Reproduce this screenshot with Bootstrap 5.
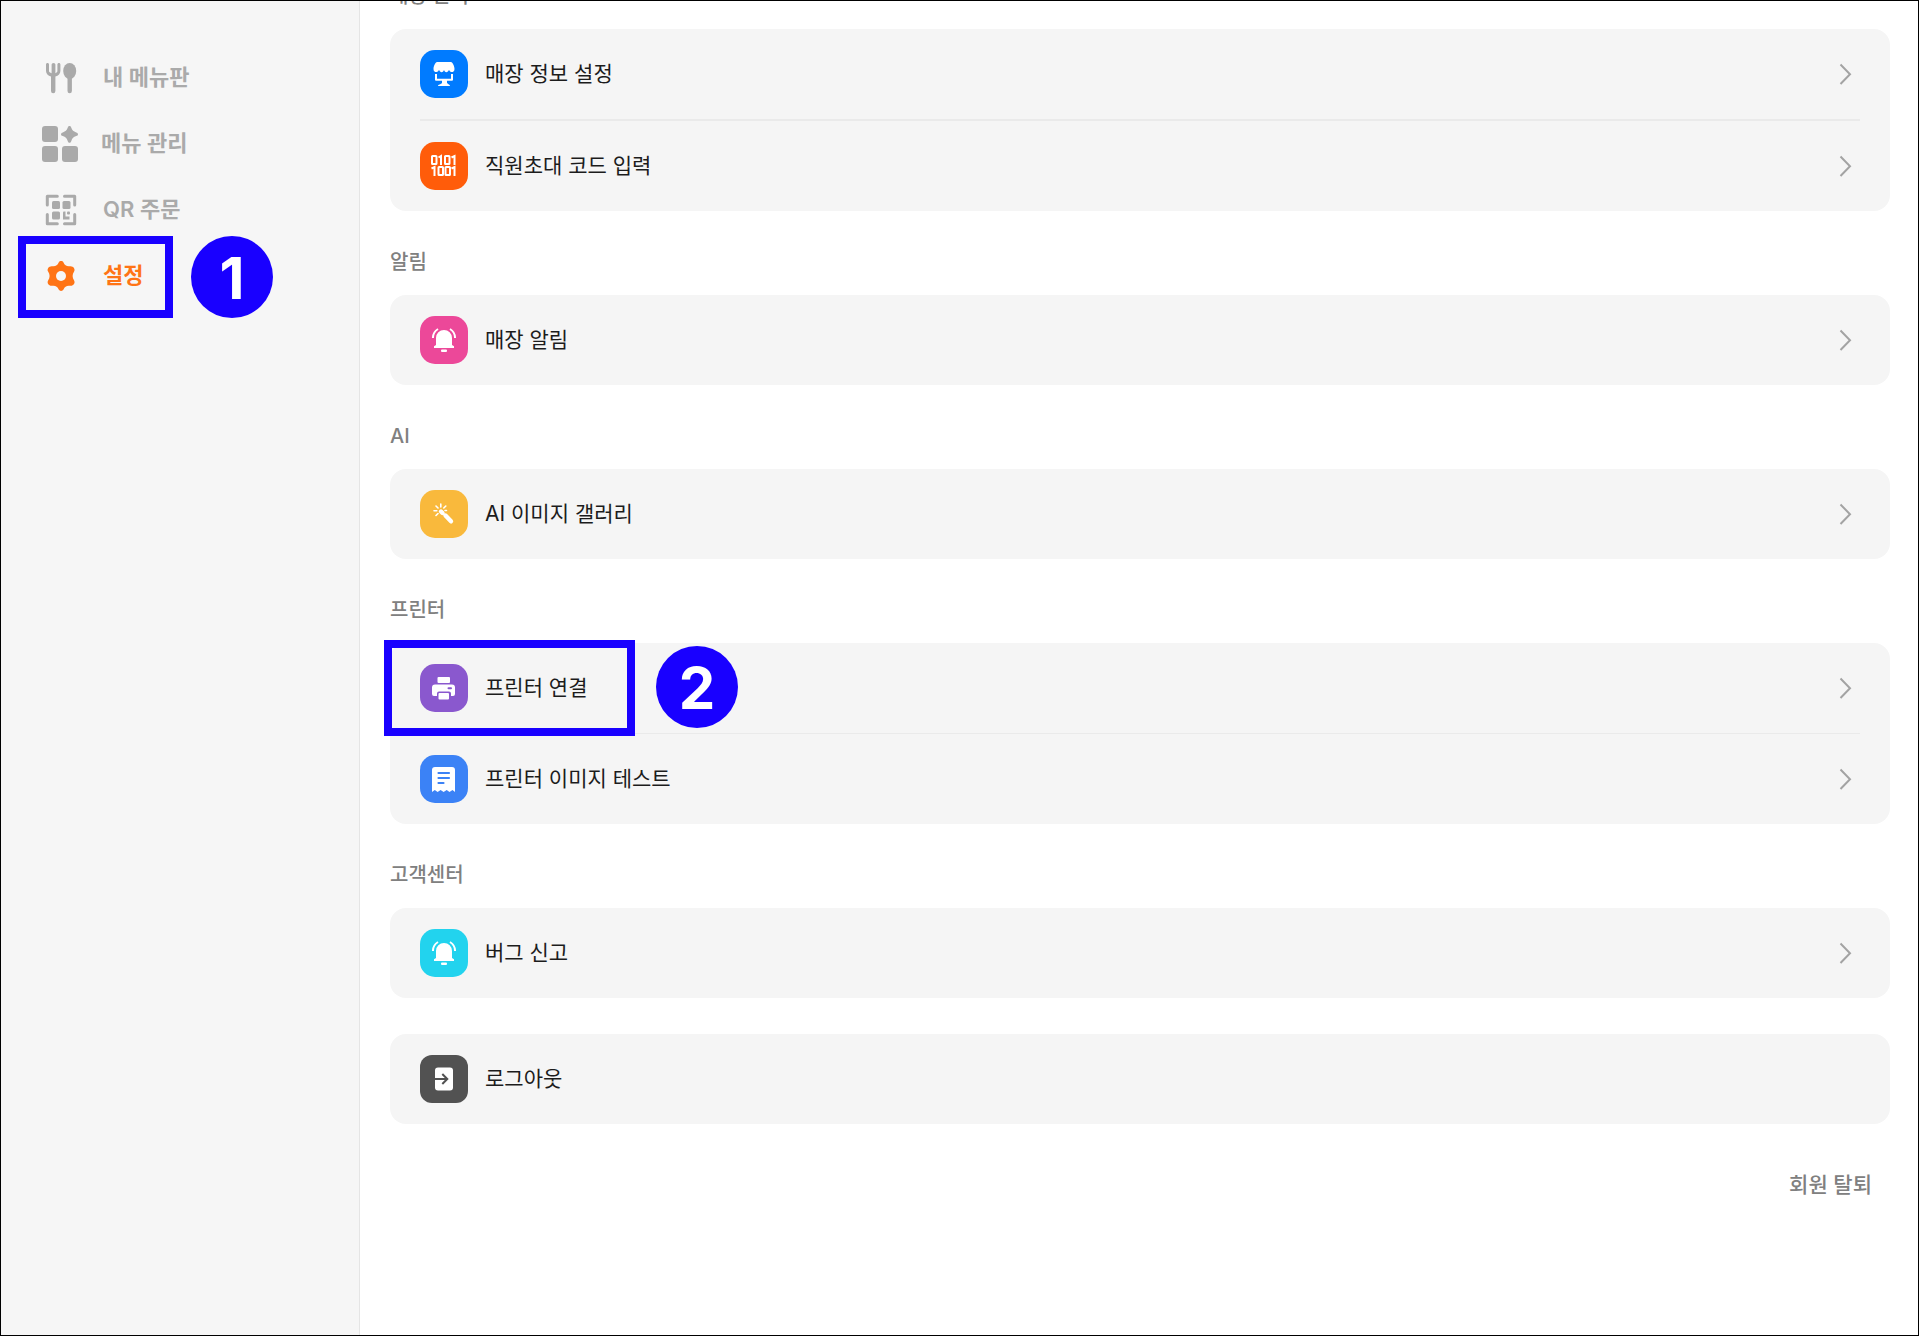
<!DOCTYPE html>
<html lang="ko">
<head>
<meta charset="utf-8">
<meta name="viewport" content="width=device-width, initial-scale=1">
<title>설정</title>
<link href="https://cdn.jsdelivr.net/npm/bootstrap@5.3.0/dist/css/bootstrap.min.css" rel="stylesheet">
<style>
  body { font-family: Inter, "Noto Sans CJK KR", sans-serif; background: #fff; }
  .app-frame { min-height: 100vh; border: 1px solid #000; overflow: hidden; }
  .side-panel { width: 359px; padding: 44px 0 0 41px; background: #f6f6f6; border-right: 1px solid #e5e5e5; }
  .side-link { height: 66px; gap: 23px; font-size: 22px; line-height: 32px; font-weight: 600; color: #aaa; text-decoration: none; position: relative; }
  .side-link.active { color: #ff7415; }
  .side-link span { padding-bottom: 2px; }
  .side-link svg { width: 38px; height: 38px; }
  .side-link svg.grid-icon { width: 36px; height: 36px; }
  .settings-pane { padding: 0 28px 0 30px; min-width: 0; }
  /* the list is shown scrolled past its first heading */
  .settings-list { margin-top: -20px; }
  .group-title { font-size: 20px; line-height: 30px; font-weight: 500; color: #808080; margin: 0 0 18px; }
  .group-box { background: #f5f5f5; border-radius: 16px; padding: 0 30px; margin-bottom: 36px; }
  .setting-row { height: 90px; gap: 17px; font-size: 21px; line-height: 30px; font-weight: 400; color: #1c1c1c; text-decoration: none; position: relative; }
  .rule-thick { height: 2px; background: #eaeaea; }
  .rule-thin { height: 1px; background: #eaeaea; }
  .tile { width: 48px; height: 48px; border-radius: 15px; }
  .tile-blue { background: #007bff; } .tile-orange { background: #ff5c0a; }
  .tile-pink { background: #ec4899; } .tile-amber { background: #f9b93c; }
  .tile-purple { background: #8a58ce; } .tile-sky { background: #3b82f6; }
  .tile-cyan { background: #22d3ee; } .tile-dark { background: #525252; border-radius: 12px; }
  .leave-btn { font-size: 21px; line-height: 30px; font-weight: 500; color: #808080; background: none; border: 0; padding: 0; margin: 10px 18px 0 0; }
  .guide-box { position: absolute; border: 8px solid #1900ff; pointer-events: none; }
  .guide-num { position: absolute; width: 82px; height: 82px; border-radius: 50%; background: #1900ff; color: #fff; font-size: 58px; line-height: 84px; font-weight: 700; text-align: center; }
  .guide-box-menu { left: -24px; top: -7px; width: 155px; height: 82px; }
  .guide-num-menu { left: 149px; top: -7px; }
  .guide-box-row { left: -36px; top: -3px; width: 251px; height: 96px; }
  .guide-num-row { left: 236px; top: 3px; }
</style>
<script src="https://cdn.jsdelivr.net/npm/bootstrap@5.3.0/dist/js/bootstrap.bundle.min.js"></script>
</head>
<body>
<svg class="d-none" xmlns="http://www.w3.org/2000/svg">
  <symbol id="chevron" viewBox="0 0 28 28"><path d="M8.500 4.500 18 14.200 8.500 24" fill="none" stroke="#a3a3a3" stroke-width="2"/></symbol>
  <symbol id="bell" viewBox="0 0 48 48">
    <path d="M16 29v-7a8 8 0 0 1 16 0v7l2 1.200V32H14v-1.800z" fill="#fff"/>
    <rect x="21" y="33.500" width="6" height="2.500" rx="1" fill="#fff"/>
    <path d="M12.900 22c0-4 1.800-7 5.100-9M35.100 22c0-4-1.800-7-5.100-9" fill="none" stroke="#fff" stroke-width="2"/>
  </symbol>
</svg>
<div class="app-frame d-flex">
  <nav class="side-panel flex-shrink-0 d-flex flex-column">
    <a class="side-link d-flex align-items-center" href="#">
      <svg viewBox="0 0 38 38" fill="#aaa"><path d="M5.500 4c-.9 0-1.500.6-1.500 1.500V12c0 2.600 2 4.700 5 5.500V32a2.200 2.200 0 0 0 4.400 0V17.500c3-.8 5-2.900 5-5.500V5.500c0-.9-.6-1.500-1.500-1.500s-1.500.6-1.500 1.500V12c0 1-.8 1.800-2 2.200V5.500a1.900 1.500 0 0 0-3.800 0v8.700C8 13.800 7 13 7 12V5.500C7 4.600 6.400 4 5.500 4z"/><ellipse cx="27.700" cy="12" rx="6.500" ry="8"/><rect x="25.500" y="16" width="4.400" height="18.300" rx="2.200"/></svg>
      <span>내 메뉴판</span></a>
    <a class="side-link d-flex align-items-center" href="#">
      <svg class="grid-icon" viewBox="0 0 36 36" fill="#aaa"><rect width="16" height="16" rx="3"/><rect y="20" width="16" height="16" rx="3"/><rect x="20" y="20" width="16" height="16" rx="3"/><path d="M27.500 0c1 0 1.400.6 1.800 1.800 1 2.600 2.100 3.600 4.900 4.700 1.200.4 1.800.8 1.800 1.800s-.6 1.400-1.800 1.800c-2.800 1.100-3.900 2.200-4.900 4.800-.4 1.200-.8 1.800-1.800 1.800s-1.400-.6-1.800-1.800c-1-2.600-2.200-3.700-4.900-4.800-1.200-.4-1.800-.8-1.800-1.800s.6-1.400 1.800-1.800c2.700-1.100 3.900-2.100 4.900-4.700.4-1.200.8-1.800 1.800-1.800z"/></svg>
      <span>메뉴 관리</span></a>
    <a class="side-link d-flex align-items-center" href="#">
      <svg viewBox="0 0 38 38" fill="#aaa"><path d="M5.300 14V5.300h10M22.500 5.300h10.200V14M5.300 23.500v9.200h10M22.500 32.700h10.200v-9.200" fill="none" stroke="#aaa" stroke-width="3" stroke-linecap="round" stroke-linejoin="round"/><rect x="10" y="10" width="8" height="8" rx="1.500"/><rect x="20.500" y="10" width="8" height="8" rx="1.500"/><rect x="10" y="20.500" width="8" height="8" rx="1.500"/><path d="M21.500 20.500h2v5h4v3h-6.500v-7z"/><rect x="25" y="20.500" width="3" height="3" rx="1"/></svg>
      <span>QR 주문</span></a>
    <a class="side-link active d-flex align-items-center" href="#" aria-current="page">
      <svg viewBox="0 0 38 38"><path d="M16.700 5.500c1-1.900 3.800-1.900 4.800 0 1.300 2.900 3 4 6.300 3.700 3.300-.6 5.900 2.800 4.300 5.200-2 2.800-2 6.200 0 9.100 1.600 2.500-1 5.900-4.300 5.200-3.300-.3-5 .8-6.300 3.800-1 1.900-3.800 1.900-4.800 0-1.300-3-3-4.100-6.300-3.800-3.300.7-5.900-2.700-4.300-5.200 2-2.900 2-6.300 0-9.100-1.600-2.400 1-5.800 4.300-5.200 3.300.3 5-.8 6.300-3.700z" fill="#ff7415"/><circle cx="19" cy="19" r="5" fill="#f6f6f6"/></svg>
      <span>설정</span>
      <i class="guide-box guide-box-menu"></i><b class="guide-num guide-num-menu">1</b></a>
  </nav>
  <main class="settings-pane flex-grow-1">
    <div class="settings-list">
      <h2 class="group-title">매장 관리</h2>
      <div class="group-box">
        <a class="setting-row d-flex align-items-center" href="#">
          <svg class="tile tile-blue" viewBox="0 0 48 48"><path d="M17 12h14c1.500 0 3.500 4 3.500 7 0 4-4.500 4-5.500.8-1 3.200-4.500 3.200-5 0-.5 3.200-4 3.200-5 0-1 3.200-5.500 3.200-5.500-.8 0-3 2-7 3.500-7z" fill="#fff"/><path d="M16 24v5.800h16V24" fill="none" stroke="#fff" stroke-width="2" stroke-linejoin="round"/><path d="M22 30h5v3c1 1.500 3 1.200 3 3H18c0-1.800 3-1.500 4-3z" fill="#fff"/></svg>
          <span class="flex-grow-1">매장 정보 설정</span><svg width="28" height="28"><use href="#chevron"/></svg></a>
        <div class="rule-thick"></div>
        <a class="setting-row d-flex align-items-center" href="#">
          <svg class="tile tile-orange" viewBox="0 0 48 48"><g fill="none" stroke="#fff" stroke-width="2"><rect x="12" y="14" width="4.500" height="8" rx=".6"/><rect x="25" y="14" width="4.500" height="8" rx=".6"/><rect x="18.500" y="25" width="4.500" height="8" rx=".6"/><rect x="25.500" y="25" width="4.500" height="8" rx=".6"/><path d="M18.500 15.500 21 14v9M31.500 15.500 34.500 14v9M11.500 26.500 14.500 25v9M31.500 26.500 34.500 25v9"/></g></svg>
          <span class="flex-grow-1">직원초대 코드 입력</span><svg width="28" height="28"><use href="#chevron"/></svg></a>
      </div>
      <h2 class="group-title">알림</h2>
      <div class="group-box">
        <a class="setting-row d-flex align-items-center" href="#">
          <svg class="tile tile-pink"><use href="#bell"/></svg>
          <span class="flex-grow-1">매장 알림</span><svg width="28" height="28"><use href="#chevron"/></svg></a>
      </div>
      <h2 class="group-title">AI</h2>
      <div class="group-box">
        <a class="setting-row d-flex align-items-center" href="#">
          <svg class="tile tile-amber" viewBox="0 0 48 48"><g stroke="#fff" fill="none" stroke-linecap="round"><path d="m21 21.500 1.500 1.500M25.500 25.500l5.500 5.800" stroke-width="4.400"/><path d="M20.800 14v3M14 20.800h2.800M25 20.500h1.500M16 16l2 2M25.800 16l-2 2M16 25.500l2-2" stroke-width="1.600"/></g></svg>
          <span class="flex-grow-1">AI 이미지 갤러리</span><svg width="28" height="28"><use href="#chevron"/></svg></a>
      </div>
      <h2 class="group-title">프린터</h2>
      <div class="group-box">
        <a class="setting-row d-flex align-items-center" href="#">
          <svg class="tile tile-purple" viewBox="0 0 48 48" fill="#fff"><rect x="17.500" y="13" width="12.500" height="6" rx="1"/><path d="M15 20.500h17a3 3 0 0 1 3 3V30a2 2 0 0 1-2 2h-2v-2.500a2 2 0 0 0-2-2H19a2 2 0 0 0-2 2V32h-3a2 2 0 0 1-2-2v-6.500a3 3 0 0 1 3-3z"/><rect x="18.500" y="29" width="10.500" height="6.500" rx="1"/><rect x="27.500" y="23.300" width="4.500" height="2" rx="1" fill="#8a58ce"/></svg>
          <span class="flex-grow-1">프린터 연결</span><svg width="28" height="28"><use href="#chevron"/></svg>
          <i class="guide-box guide-box-row"></i><b class="guide-num guide-num-row">2</b></a>
        <div class="rule-thin"></div>
        <a class="setting-row d-flex align-items-center" href="#">
          <svg class="tile tile-sky" viewBox="0 0 48 48"><path d="M15 12h17a3 3 0 0 1 3 3v22l-2.500-2-3 2-2.800-2-3.100 2-3-2-3 2-2.800-2-2.800 2V15a3 3 0 0 1 3-3z" fill="#fff"/><path d="M18.500 18h10.500M18.500 23h10.500M18.500 28h5" stroke="#3b82f6" stroke-width="2.200" stroke-linecap="round"/></svg>
          <span class="flex-grow-1">프린터 이미지 테스트</span><svg width="28" height="28"><use href="#chevron"/></svg></a>
      </div>
      <h2 class="group-title">고객센터</h2>
      <div class="group-box">
        <a class="setting-row d-flex align-items-center" href="#">
          <svg class="tile tile-cyan"><use href="#bell"/></svg>
          <span class="flex-grow-1">버그 신고</span><svg width="28" height="28"><use href="#chevron"/></svg></a>
      </div>
      <div class="group-box">
        <a class="setting-row d-flex align-items-center" href="#">
          <svg class="tile tile-dark" viewBox="0 0 48 48"><rect x="15" y="12.500" width="18" height="23" rx="3" fill="#fff"/><path d="M14.500 24h12.500M22.300 19l5 5-5 5" fill="none" stroke="#525252" stroke-width="2"/></svg>
          <span class="flex-grow-1">로그아웃</span></a>
      </div>
      <div class="d-flex justify-content-end"><button type="button" class="leave-btn">회원 탈퇴</button></div>
    </div>
  </main>
</div>
</body>
</html>
